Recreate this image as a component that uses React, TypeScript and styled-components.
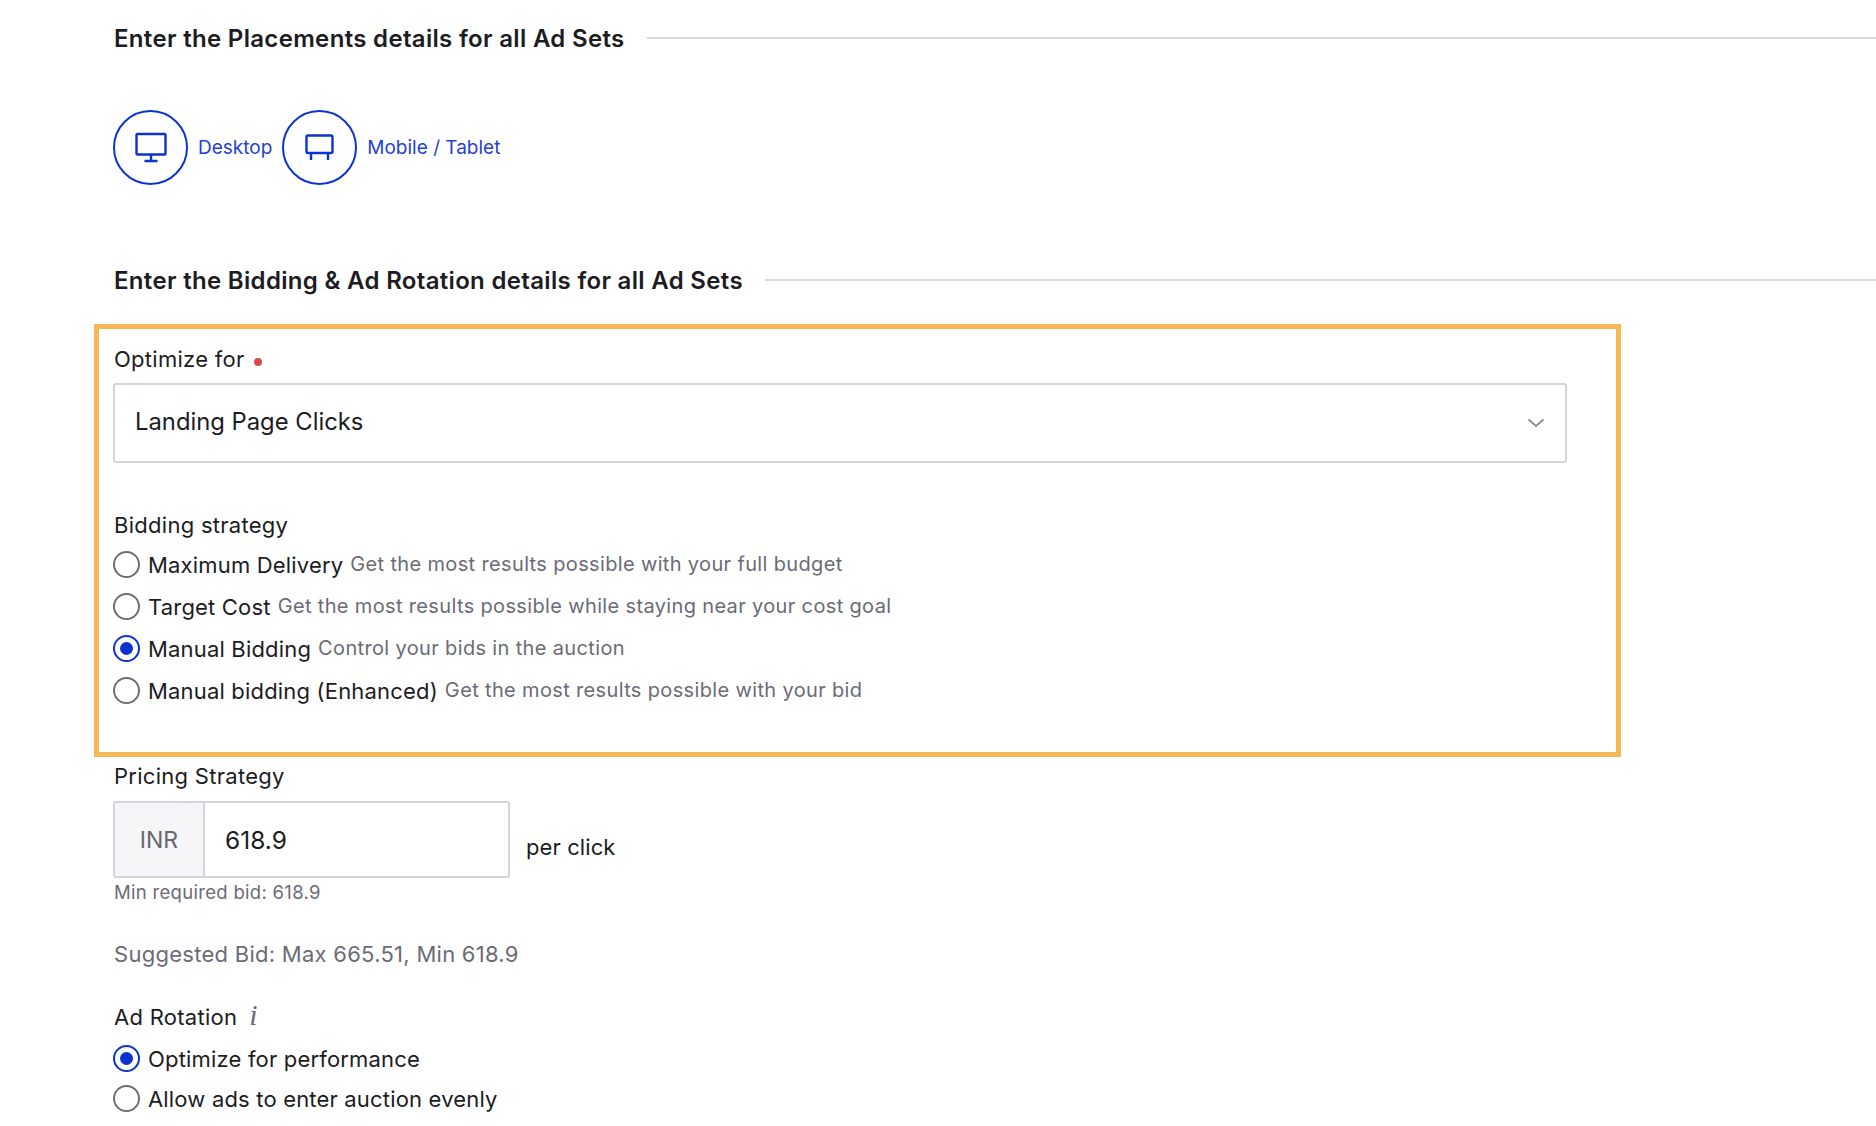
import React from "react";
import styled, { createGlobalStyle } from "styled-components";

const GlobalStyle = createGlobalStyle`
    html, body {
        margin: 0;
        padding: 0;
        background: #ffffff;
        overflow: hidden;
    }
    body {
        font-family: Inter, "Liberation Sans", sans-serif;
        color: #1c1c22;
    }
`;

const Page = styled.div`
    width: 1876px;
    height: 1126px;
    overflow: hidden;
    padding: 24px 0 0 114px;
    box-sizing: border-box;
`;

const SectionHeader = styled.div<{ $top?: number }>`
    display: flex;
    align-items: center;
    height: 30px;
    margin-top: ${(p) => p.$top ?? 0}px;
    gap: 22px;
`;

const SectionTitle = styled.h2`
    margin: 0;
    font-size: 24px;
    letter-spacing: 0.32px;
    line-height: 30px;
    font-weight: 600;
    white-space: nowrap;
    color: #1c1c22;
`;

const SectionRule = styled.div`
    flex: 1;
    height: 2px;
    margin-top: -3px;
    background: #d8d8de;
`;

const Placements = styled.div`
    display: flex;
    align-items: center;
    margin: 56px 0 0 -1px;
    gap: 10px;
`;

const Placement = styled.div`
    display: flex;
    align-items: center;
    gap: 10px;
`;

const PlacementCircle = styled.div`
    width: 75px;
    height: 75px;
    box-sizing: border-box;
    border: 2px solid #0b33cf;
    border-radius: 50%;
    display: flex;
    align-items: center;
    justify-content: center;
`;

const PlacementLabel = styled.span`
    font-size: 19px;
    color: #1f42d2;
`;

const Highlight = styled.div`
    width: 1527px;
    height: 433px;
    box-sizing: border-box;
    margin: 28px 0 0 -20px;
    padding: 15px 0 0 15px;
    border: 5px solid #f6b756;
`;

const FieldLabel = styled.div`
    font-size: 22px;
    letter-spacing: 0.28px;
    line-height: 30px;
    color: #1c1c22;
    display: flex;
    align-items: center;
`;

const BiddingLabel = styled(FieldLabel)`
    margin-top: 47px;
`;

const RequiredDot = styled.span`
    width: 8px;
    height: 8px;
    border-radius: 50%;
    background: #d84a4a;
    margin: 6px 0 0 9px;
`;

const SelectBox = styled.div`
    width: 1454px;
    height: 80px;
    box-sizing: border-box;
    margin: 9px 0 0 -1px;
    padding: 0 20px 3px 20px;
    border: 2px solid #d4d4db;
    border-radius: 3px;
    display: flex;
    align-items: center;
    justify-content: space-between;
    font-size: 23.8px;
    color: #1c1c22;
`;

const SelectChevron = styled.span`
    display: flex;
    margin-top: 3px;
`;

const RadioGroup = styled.div<{ $gap: number }>`
    display: flex;
    flex-direction: column;
    gap: ${(p) => p.$gap}px;
    margin: 10px 0 0 -1px;
`;

const RadioRow = styled.div`
    display: flex;
    align-items: center;
    height: 28px;
`;

const RadioMark = styled.span<{ $checked?: boolean }>`
    width: 27px;
    height: 27px;
    flex: none;
    box-sizing: border-box;
    border-radius: 50%;
    border: 2px solid ${(p) => (p.$checked ? "#0b33cf" : "#6d6d78")};
    display: flex;
    align-items: center;
    justify-content: center;
    margin-right: 8px;

    &::after {
        content: "";
        display: ${(p) => (p.$checked ? "block" : "none")};
        width: 13px;
        height: 13px;
        border-radius: 50%;
        background: #0b33cf;
    }
`;

const RadioLabel = styled.span`
    font-size: 22px;
    letter-spacing: 0.18px;
    color: #1c1c22;
    white-space: nowrap;
    margin-top: 1px;
`;

const RadioHint = styled.span`
    font-size: 20px;
    letter-spacing: 0.35px;
    color: #6b6b76;
    white-space: nowrap;
    margin: -1px 0 0 7px;
`;

const PricingLabel = styled(FieldLabel)`
    margin-top: 4px;
`;

const PricingRow = styled.div`
    display: flex;
    align-items: flex-end;
    margin: 10px 0 0 -1px;
`;

const PriceInput = styled.div`
    width: 397px;
    height: 77px;
    box-sizing: border-box;
    border: 2px solid #d4d4db;
    border-radius: 3px;
    display: flex;
    overflow: hidden;
`;

const Currency = styled.div`
    width: 88px;
    flex: none;
    background: #f6f6f8;
    border-right: 2px solid #d4d4db;
    display: flex;
    align-items: center;
    justify-content: center;
    font-size: 23px;
    color: #666671;
`;

const PriceValue = styled.div`
    flex: 1;
    display: flex;
    align-items: center;
    padding-left: 20px;
    font-size: 24.5px;
    color: #1c1c22;
`;

const PerClick = styled.span`
    font-size: 22px;
    letter-spacing: 0.1px;
    line-height: 30px;
    margin: 0 0 16px 16px;
`;

const MinBid = styled.div`
    font-size: 18.5px;
    letter-spacing: 0.3px;
    line-height: 22px;
    color: #6b6b76;
    margin-top: 3px;
`;

const Suggested = styled.div`
    font-size: 22px;
    letter-spacing: 0.27px;
    line-height: 28px;
    color: #6b6b76;
    margin-top: 37px;
`;

const RotationLabel = styled(FieldLabel)`
    margin-top: 34px;
`;

const InfoGlyph = styled.span`
    font-family: "Liberation Serif", serif;
    font-style: italic;
    font-size: 30px;
    color: #6b6b76;
    margin: -4px 0 0 12px;
`;

const RotationRadios = styled(RadioGroup)`
    margin-top: 12px;
`;

const DesktopIcon = () => (
    <svg width="32" height="32" viewBox="0 0 32 32" fill="none" stroke="#0b33cf" strokeWidth="2.4">
        <rect x="1.5" y="2" width="29" height="20.5" rx="1" />
        <path d="M16 23v6M9.5 29h13" />
    </svg>
);

const TabletIcon = () => (
    <svg width="29" height="27" viewBox="0 0 29 27" fill="none" stroke="#0b33cf" strokeWidth="2.4">
        <rect x="1.5" y="1.5" width="26" height="17.5" rx="1.5" />
        <path d="M6 19v7M23 19v7" />
    </svg>
);

const ChevronIcon = () => (
    <svg width="18" height="10" viewBox="0 0 18 10" fill="none" stroke="#8e8e98" strokeWidth="2">
        <path d="M1.5 1.5L9 8l7.5-6.5" />
    </svg>
);

const biddingOptions = [
    { label: "Maximum Delivery", hint: "Get the most results possible with your full budget" },
    { label: "Target Cost", hint: "Get the most results possible while staying near your cost goal" },
    { label: "Manual Bidding", hint: "Control your bids in the auction", checked: true },
    { label: "Manual bidding (Enhanced)", hint: "Get the most results possible with your bid" },
];

const App: React.FC = () => {
    return (
        <Page>
            <GlobalStyle />
            <SectionHeader>
                <SectionTitle>Enter the Placements details for all Ad Sets</SectionTitle>
                <SectionRule />
            </SectionHeader>
            <Placements>
                <Placement>
                    <PlacementCircle><DesktopIcon /></PlacementCircle>
                    <PlacementLabel>Desktop</PlacementLabel>
                </Placement>
                <Placement>
                    <PlacementCircle><TabletIcon /></PlacementCircle>
                    <PlacementLabel>Mobile / Tablet</PlacementLabel>
                </Placement>
            </Placements>
            <SectionHeader $top={81}>
                <SectionTitle>Enter the Bidding &amp; Ad Rotation details for all Ad Sets</SectionTitle>
                <SectionRule />
            </SectionHeader>
            <Highlight>
                <FieldLabel>Optimize for<RequiredDot /></FieldLabel>
                <SelectBox>
                    <span>Landing Page Clicks</span>
                    <SelectChevron><ChevronIcon /></SelectChevron>
                </SelectBox>
                <BiddingLabel>Bidding strategy</BiddingLabel>
                <RadioGroup $gap={14}>
                    {biddingOptions.map((option) => (
                        <RadioRow key={option.label}>
                            <RadioMark $checked={option.checked} />
                            <RadioLabel>{option.label}</RadioLabel>
                            <RadioHint>{option.hint}</RadioHint>
                        </RadioRow>
                    ))}
                </RadioGroup>
            </Highlight>
            <PricingLabel>Pricing Strategy</PricingLabel>
            <PricingRow>
                <PriceInput>
                    <Currency>INR</Currency>
                    <PriceValue>618.9</PriceValue>
                </PriceInput>
                <PerClick>per click</PerClick>
            </PricingRow>
            <MinBid>Min required bid: 618.9</MinBid>
            <Suggested>Suggested Bid: Max 665.51, Min 618.9</Suggested>
            <RotationLabel>Ad Rotation<InfoGlyph>i</InfoGlyph></RotationLabel>
            <RotationRadios $gap={12}>
                <RadioRow>
                    <RadioMark $checked />
                    <RadioLabel>Optimize for performance</RadioLabel>
                </RadioRow>
                <RadioRow>
                    <RadioMark />
                    <RadioLabel>Allow ads to enter auction evenly</RadioLabel>
                </RadioRow>
            </RotationRadios>
        </Page>
    );
};

export default App;
